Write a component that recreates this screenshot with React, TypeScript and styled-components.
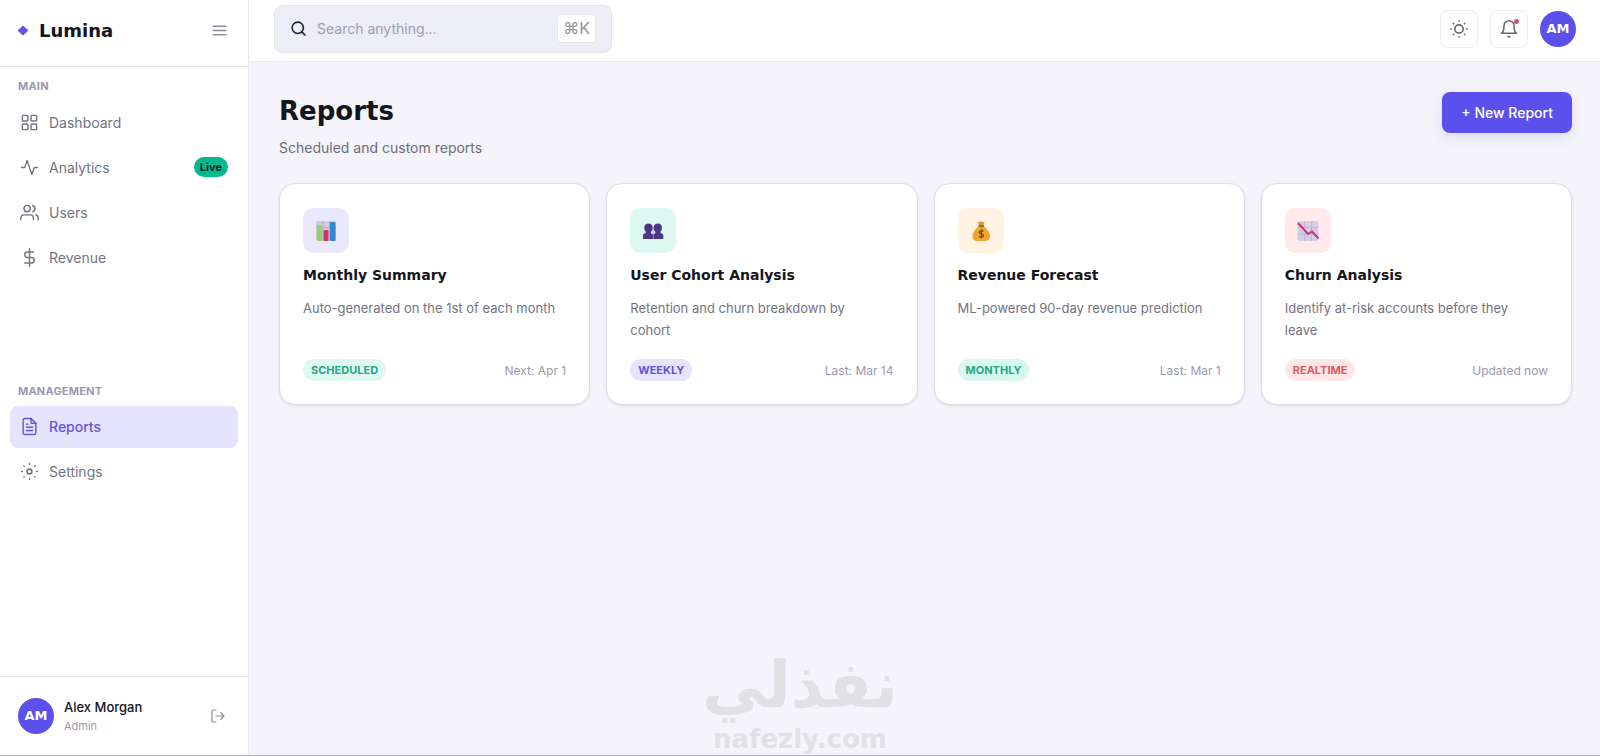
import React from "react";
import styled, { createGlobalStyle } from "styled-components";

const body = `Inter, "Open Sans", sans-serif`;
const display = `"DejaVu Sans", Inter, sans-serif`;

const GlobalStyle = createGlobalStyle`
  * { box-sizing: border-box; }
  body { margin: 0; background: #f4f4fa; color: #14141c; font-family: ${body}; }
  h1, h2, p, ul { margin: 0; padding: 0; }
  ul { list-style: none; }
  button, input { font-family: inherit; }
  svg { display: block; flex: none; }
`;

const Shell = styled.div`
  position: relative;
  display: grid;
  grid-template-columns: 249px 1fr;
  min-height: 100vh;
  border-bottom: 1px solid #b4b4ba;
`;

const Sidebar = styled.aside`
  display: flex;
  flex-direction: column;
  background: #fff;
  border-right: 1px solid #e8e8f0;
`;

const Brand = styled.div`
  display: flex;
  align-items: center;
  justify-content: space-between;
  height: 67px;
  padding: 0 20px 5px 17px;
  border-bottom: 1px solid #e4e4ef;
`;

const Logo = styled.a`
  display: flex;
  align-items: center;
  gap: 10px;
  color: #14141c;
  font: bold 18px/24px ${display};
  text-decoration: none;
`;

const PlainButton = styled.button`
  display: flex;
  padding: 0;
  border: 0;
  background: none;
  color: #8b8b9b;
  cursor: pointer;
`;

const Nav = styled.nav`
  display: flex;
  flex: 1;
  flex-direction: column;
  padding: 0 10px;
`;

const Section = styled.section`
  flex: 1 0 0;
  padding-top: 10px;
`;

const SectionTitle = styled.h2`
  padding: 0 8px;
  color: #9a9aaa;
  font-size: 11px;
  font-weight: 700;
  line-height: 18px;
  text-transform: uppercase;
  letter-spacing: 0.2px;
`;

const NavList = styled.ul`
  display: grid;
  gap: 3px;
  padding-top: 6px;
`;

const NavLink = styled.a<{ $active?: boolean }>`
  display: flex;
  align-items: center;
  gap: 10px;
  height: 42px;
  padding: 0 10px;
  border-radius: 8px;
  background: ${(p) => (p.$active ? "#e6e3fc" : "transparent")};
  color: ${(p) => (p.$active ? "#6355d8" : "#737381")};
  font-size: 14px;
  font-weight: ${(p) => (p.$active ? 500 : 400)};
  text-decoration: none;
`;

const LiveBadge = styled.span`
  margin-left: auto;
  padding: 0 6px;
  border-radius: 10px;
  background: #04b88f;
  color: #06251e;
  font-size: 11px;
  font-weight: 700;
  line-height: 20px;
`;

const Profile = styled.footer`
  display: flex;
  align-items: center;
  gap: 10px;
  height: 79px;
  padding: 0 22px 0 18px;
  border-top: 1px solid #e2e2ea;
`;

const Avatar = styled.span`
  display: grid;
  place-items: center;
  flex: none;
  width: 36px;
  height: 36px;
  border-radius: 50%;
  background: #5b50ec;
  color: #fff;
  font: bold 13px/16px ${display};
`;

const Person = styled.div`
  flex: 1;
  font-size: 13px;
  font-weight: 500;
  line-height: 20px;
`;

const Role = styled.p`
  color: #9a9aaa;
  font-size: 11px;
  font-weight: 400;
  line-height: 18px;
`;

const Page = styled.div`
  display: flex;
  flex-direction: column;
  min-width: 0;
`;

const Topbar = styled.header`
  display: flex;
  align-items: center;
  justify-content: space-between;
  height: 62px;
  padding: 0 24px 4px 25px;
  background: #fff;
  border-bottom: 1px solid #e8e8f0;
`;

const Search = styled.label`
  display: flex;
  align-items: center;
  gap: 10px;
  width: 338px;
  height: 48px;
  padding: 0 15px;
  border: 1px solid #e4e4ee;
  border-radius: 8px;
  background: #ededf7;
  color: #1c1c26;
`;

const SearchInput = styled.input`
  flex: 1;
  min-width: 0;
  padding: 0;
  border: 0;
  outline: 0;
  background: none;
  color: #14141c;
  font-size: 14px;
  line-height: 20px;
  &::placeholder { color: #9d9dad; opacity: 1; }
`;

const Kbd = styled.kbd`
  padding: 0 5px;
  border: 1px solid #e6e6f0;
  border-radius: 4px;
  background: #fff;
  color: #9292a0;
  font: 16px/27px Inter, "DejaVu Sans", sans-serif;
`;

const Actions = styled.div`
  display: flex;
  align-items: center;
  gap: 12px;
`;

const IconButton = styled.button`
  position: relative;
  display: grid;
  place-items: center;
  width: 38px;
  height: 38px;
  padding: 0;
  border: 1px solid #ebebf2;
  border-radius: 8px;
  background: #fff;
  color: #666674;
  cursor: pointer;
`;

const Dot = styled.span`
  position: absolute;
  top: 8px;
  right: 8px;
  width: 5px;
  height: 5px;
  border-radius: 50%;
  background: #d4506c;
`;

const Content = styled.main`
  flex: 1;
  padding: 30px 28px 30px 30px;
`;

const PageHeader = styled.div`
  display: flex;
  align-items: flex-start;
  justify-content: space-between;
  margin-bottom: 24px;
`;

const Title = styled.h1`
  font: bold 26px/38px ${display};
`;

const Subtitle = styled.p`
  padding-top: 6px;
  color: #6d6d7b;
  font-size: 14px;
  line-height: 23px;
`;

const PrimaryButton = styled.button`
  height: 41px;
  padding: 0 19px;
  border: 0;
  border-radius: 8px;
  background: #5b50ec;
  box-shadow: 0 4px 12px rgba(91, 80, 236, 0.16);
  color: #fff;
  font-size: 14px;
  font-weight: 500;
  cursor: pointer;
`;

const Cards = styled.div`
  display: grid;
  grid-template-columns: repeat(4, minmax(0, 1fr));
  gap: 16px;
`;

const Card = styled.article`
  padding: 24px 23px 23px;
  border: 1px solid #dedee6;
  border-radius: 16px;
  background: #fff;
  box-shadow: 0 1px 3px rgba(20, 20, 40, 0.1);
`;

const IconTile = styled.div<{ $bg: string }>`
  display: grid;
  place-items: center;
  width: 46px;
  height: 45px;
  border-radius: 10px;
  background: ${(p) => p.$bg};
`;

const CardTitle = styled.h2`
  padding-top: 12px;
  font: bold 14px/20px ${display};
`;

const CardText = styled.p`
  min-height: 56px;
  padding: 12px 8px 0 0;
  color: #737381;
  font-size: 13px;
  line-height: 22px;
`;

const CardFooter = styled.div`
  display: flex;
  align-items: center;
  justify-content: space-between;
  padding-top: 18px;
  color: #9a9aaa;
  font-size: 12px;
`;

const Tag = styled.span<{ $bg: string; $fg: string }>`
  padding: 0 8px;
  border-radius: 11px;
  background: ${(p) => p.$bg};
  color: ${(p) => p.$fg};
  font-size: 11px;
  font-weight: 700;
  line-height: 22px;
`;

const Watermark = styled.div`
  position: absolute;
  bottom: 0;
  left: 50%;
  display: flex;
  flex-direction: column;
  align-items: center;
  transform: translateX(-50%);
  color: #e1e1e4;
  pointer-events: none;
`;

const WatermarkArabic = styled.span`
  font: bold 64px/76px "DejaVu Sans", sans-serif;
`;

const WatermarkLatin = styled.span`
  font: bold 26px/32px "DejaVu Sans", sans-serif;
`;

const Icon = ({ size = 19, children }: { size?: number; children: React.ReactNode }) => (
  <svg width={size} height={size} viewBox="0 0 24 24" fill="none" stroke="currentColor"
    strokeWidth="1.8" strokeLinecap="round" strokeLinejoin="round" aria-hidden="true">
    {children}
  </svg>
);

const icons = {
  dashboard: (
    <Icon>
      <rect x="3" y="3" width="7" height="7" rx="1" /><rect x="14" y="3" width="7" height="7" rx="1" />
      <rect x="14" y="14" width="7" height="7" rx="1" /><rect x="3" y="14" width="7" height="7" rx="1" />
    </Icon>
  ),
  analytics: <Icon><path d="M22 12h-4l-3 9L9 3l-3 9H2" /></Icon>,
  users: (
    <Icon>
      <path d="M17 21v-2a4 4 0 0 0-4-4H5a4 4 0 0 0-4 4v2" /><circle cx="9" cy="7" r="4" />
      <path d="M23 21v-2a4 4 0 0 0-3-3.87M16 3.13a4 4 0 0 1 0 7.75" />
    </Icon>
  ),
  revenue: <Icon><path d="M12 1v22M17 5H9.5a3.5 3.5 0 0 0 0 7h5a3.5 3.5 0 0 1 0 7H6" /></Icon>,
  reports: (
    <Icon>
      <path d="M14 2H6a2 2 0 0 0-2 2v16a2 2 0 0 0 2 2h12a2 2 0 0 0 2-2V8z" />
      <path d="M14 2v6h6M16 13H8M16 17H8M10 9H8" />
    </Icon>
  ),
  settings: (
    <Icon>
      <circle cx="12" cy="12" r="3" strokeWidth="2.2" />
      <path d="M12 2v1M12 21v1M2 12h1M21 12h1M4.900 4.900l.5.5M18.600 18.600l.5.5M4.900 19.100l.5-.5M18.600 5.400l.5-.5" />
    </Icon>
  ),
};

const BarsEmoji = () => (
  <svg width="22" height="22" viewBox="0 0 22 22" aria-hidden="true">
    <rect x="1" y="1" width="20" height="20" rx="2" fill="#cfcbdc" />
    <path d="M1 7.500h20M1 14h20M8 1v20M14.500 1v20" stroke="#aaa5bd" strokeWidth=".7" />
    <rect x="2" y="5" width="5" height="16" rx="1" fill="#86d965" />
    <rect x="8.500" y="10" width="5" height="11" rx="1" fill="#d23367" />
    <rect x="15" y="2" width="5.500" height="19" rx="1" fill="#3486d3" />
  </svg>
);

const PeopleEmoji = () => (
  <svg width="22" height="22" viewBox="0 0 22 22" fill="#4c3685" aria-hidden="true">
    <path d="M6.500 3.500c2.700 0 4.200 1.700 4.200 4 0 1.800-.6 3.300-1.700 4.200v1.500l2 1.300V19H1v-3.500c0-1.200.5-2 2.700-2.600v-1.300C2.700 10.700 2.300 9.300 2.300 7.500c0-2.300 1.500-4 4.200-4z" />
    <path d="M15.800 3.500c-2.700 0-4.200 1.700-4.200 4 0 1.800.6 3.300 1.700 4.200v1.500l-2 1.300V19h10v-3.500c0-1.200-.5-2-2.700-2.600v-1.300c1-.9 1.400-2.300 1.400-4.100 0-2.300-1.500-4-4.200-4z" />
    <path d="M11.100 8v10" stroke="#8a76b8" strokeWidth=".7" />
  </svg>
);

const MoneyEmoji = () => (
  <svg width="22" height="22" viewBox="0 0 22 22" aria-hidden="true">
    <path d="M8 1.500l1.700.8L11.200 1l1.400 1.300 1.900-.8L13.400 6H9z" fill="#dc9637" />
    <path d="M9 6h4.500c3 2.200 6.500 6.200 6.500 10 0 3.300-2 5-5 5H7.500c-3 0-5-1.700-5-5C2.500 12.200 6 8.200 9 6z" fill="#f0a62d" />
    <path d="M8.500 6h5.500" stroke="#8d5425" strokeWidth="1.500" />
    <path d="M13.500 11.300c-.8-.8-4.300-1-4.300 1 0 2.100 4.500 1.100 4.500 3.300 0 2-3.700 2-4.700.7M11.300 9.500v8.800" fill="none" stroke="#70431f" strokeWidth="1.200" />
  </svg>
);

const DeclineEmoji = () => (
  <svg width="22" height="22" viewBox="0 0 22 22" aria-hidden="true">
    <rect x="0.500" y="1" width="21" height="20" rx="2.500" fill="#d5cde8" />
    <path d="M1 7.500h20M1 14h20M7.500 1v20M14.500 1v20" stroke="#b5b3d8" strokeWidth=".8" />
    <path d="M1 3l10 11 4-2.500 6.500 7" fill="none" stroke="#c8386f" strokeWidth="2" />
  </svg>
);

const reports = [
  { title: "Monthly Summary", text: "Auto-generated on the 1st of each month", tag: "SCHEDULED", when: "Next: Apr 1", tile: "#eae8fd", bg: "#dff9f2", fg: "#22a886", art: <BarsEmoji /> },
  { title: "User Cohort Analysis", text: "Retention and churn breakdown by cohort", tag: "WEEKLY", when: "Last: Mar 14", tile: "#dcf8f1", bg: "#e6e3fc", fg: "#6053d6", art: <PeopleEmoji /> },
  { title: "Revenue Forecast", text: "ML-powered 90-day revenue prediction", tag: "MONTHLY", when: "Last: Mar 1", tile: "#fff3e3", bg: "#d6f8ee", fg: "#22a886", art: <MoneyEmoji /> },
  { title: "Churn Analysis", text: "Identify at-risk accounts before they leave", tag: "REALTIME", when: "Updated now", tile: "#ffe9ea", bg: "#ffe7e8", fg: "#dc5a62", art: <DeclineEmoji /> },
];

export default function App() {
  return (
    <>
      <GlobalStyle />
      <Shell>
        <Sidebar>
          <Brand>
            <Logo href="#">
              <svg width="12" height="12" viewBox="0 0 12 12" aria-hidden="true">
                <path d="M6 1L11 5.500 6 10 1 5.500z" fill="#6254e2" stroke="#6254e2" strokeLinejoin="round" />
              </svg>
              Lumina
            </Logo>
            <PlainButton aria-label="Toggle menu">
              <Icon size={17}><path d="M3 6h18M3 12h18M3 18h18" /></Icon>
            </PlainButton>
          </Brand>
          <Nav>
            <Section>
              <SectionTitle>Main</SectionTitle>
              <NavList>
                <li><NavLink href="#">{icons.dashboard}Dashboard</NavLink></li>
                <li><NavLink href="#">{icons.analytics}Analytics<LiveBadge>Live</LiveBadge></NavLink></li>
                <li><NavLink href="#">{icons.users}Users</NavLink></li>
                <li><NavLink href="#">{icons.revenue}Revenue</NavLink></li>
              </NavList>
            </Section>
            <Section>
              <SectionTitle>Management</SectionTitle>
              <NavList>
                <li><NavLink href="#" $active aria-current="page">{icons.reports}Reports</NavLink></li>
                <li><NavLink href="#">{icons.settings}Settings</NavLink></li>
              </NavList>
            </Section>
          </Nav>
          <Profile>
            <Avatar>AM</Avatar>
            <Person>Alex Morgan<Role>Admin</Role></Person>
            <PlainButton aria-label="Log out">
              <Icon size={16}><path d="M9 21H5a2 2 0 0 1-2-2V5a2 2 0 0 1 2-2h4M16 17l5-5-5-5M21 12H9" /></Icon>
            </PlainButton>
          </Profile>
        </Sidebar>
        <Page>
          <Topbar>
            <Search>
              <Icon size={17}><circle cx="11" cy="11" r="8" strokeWidth="2.2" /><path d="M21 21l-4.300-4.300" strokeWidth="2.2" /></Icon>
              <SearchInput type="text" placeholder="Search anything..." aria-label="Search" />
              <Kbd>⌘K</Kbd>
            </Search>
            <Actions>
              <IconButton aria-label="Toggle theme">
                <Icon size={18}>
                  <circle cx="12" cy="12" r="5.500" strokeWidth="2.2" />
                  <path d="M12 1v1M12 22v1M1 12h1M22 12h1M4.200 4.200l.7.7M19.100 19.100l.7.7M4.200 19.800l.7-.7M19.100 4.900l.7-.7" />
                </Icon>
              </IconButton>
              <IconButton aria-label="Notifications">
                <Icon size={20}><path d="M18 8A6 6 0 0 0 6 8c0 7-3 9-3 9h18s-3-2-3-9M13.200 21a2 2 0 0 1-2.400 0" /></Icon>
                <Dot />
              </IconButton>
              <Avatar>AM</Avatar>
            </Actions>
          </Topbar>
          <Content>
            <PageHeader>
              <div>
                <Title>Reports</Title>
                <Subtitle>Scheduled and custom reports</Subtitle>
              </div>
              <PrimaryButton>+ New Report</PrimaryButton>
            </PageHeader>
            <Cards>
              {reports.map((r) => (
                <Card key={r.title}>
                  <IconTile $bg={r.tile}>{r.art}</IconTile>
                  <CardTitle>{r.title}</CardTitle>
                  <CardText>{r.text}</CardText>
                  <CardFooter>
                    <Tag $bg={r.bg} $fg={r.fg}>{r.tag}</Tag>
                    <span>{r.when}</span>
                  </CardFooter>
                </Card>
              ))}
            </Cards>
          </Content>
        </Page>
        <Watermark>
          <WatermarkArabic lang="ar" dir="rtl">نفذلي</WatermarkArabic>
          <WatermarkLatin>nafezly.com</WatermarkLatin>
        </Watermark>
      </Shell>
    </>
  );
}
